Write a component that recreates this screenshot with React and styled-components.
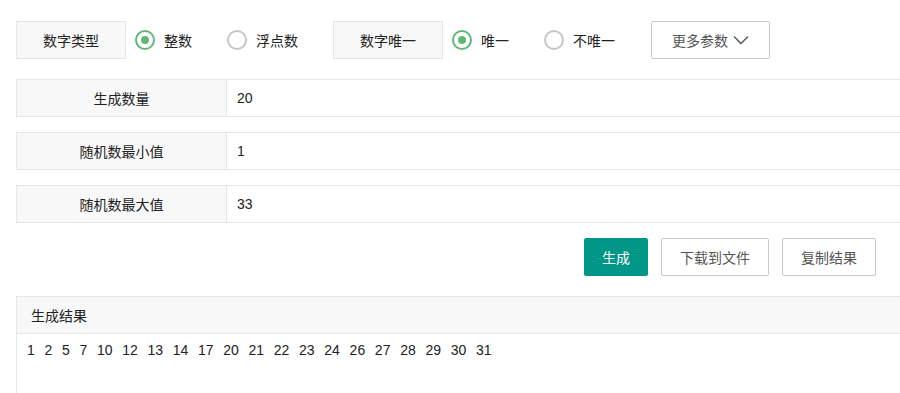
import React, { useState } from 'react';
import styled, { createGlobalStyle } from 'styled-components';

const GlobalStyle = createGlobalStyle`
  html, body {
    margin: 0;
    padding: 0;
    background: #fff;
    overflow: hidden;
  }
  body {
    font-family: "Liberation Sans", "Noto Sans CJK SC", sans-serif;
    font-size: 14px;
    color: #333;
  }
`;

const numbers = [1, 2, 5, 7, 10, 12, 13, 14, 17, 20, 21, 22, 23, 24, 26, 27, 28, 29, 30, 31];

const fields = [
  { label: '生成数量', value: '20' },
  { label: '随机数最小值', value: '1' },
  { label: '随机数最大值', value: '33' },
];

const App = () => {
  const [numType, setNumType] = useState('int');
  const [unique, setUnique] = useState('yes');

  return (
    <Page>
      <GlobalStyle />
      <OptionBar>
        <OptionLabel>数字类型</OptionLabel>
        <RadioGroup>
          <RadioOption onClick={() => setNumType('int')}>
            <RadioCircle $checked={numType === 'int'} />
            整数
          </RadioOption>
          <RadioOption onClick={() => setNumType('float')}>
            <RadioCircle $checked={numType === 'float'} />
            浮点数
          </RadioOption>
        </RadioGroup>
        <OptionLabel>数字唯一</OptionLabel>
        <RadioGroup>
          <RadioOption onClick={() => setUnique('yes')}>
            <RadioCircle $checked={unique === 'yes'} />
            唯一
          </RadioOption>
          <RadioOption onClick={() => setUnique('no')}>
            <RadioCircle $checked={unique === 'no'} />
            不唯一
          </RadioOption>
        </RadioGroup>
        <MoreButton>
          更多参数
          <svg width="16" height="10" viewBox="0 0 16 10" fill="none">
            <path d="M1 1.5 L8 8.5 L15 1.5" stroke="#555" strokeWidth="1.4" />
          </svg>
        </MoreButton>
      </OptionBar>

      <FieldList>
        {fields.map(f => (
          <FieldRow key={f.label}>
            <FieldLabel>{f.label}</FieldLabel>
            <FieldValue>{f.value}</FieldValue>
          </FieldRow>
        ))}
      </FieldList>

      <ActionBar>
        <Button $primary>生成</Button>
        <Button>下载到文件</Button>
        <Button>复制结果</Button>
      </ActionBar>

      <ResultPanel>
        <ResultHeader>生成结果</ResultHeader>
        <ResultBody>
          {numbers.map(n => (
            <Num key={n}>{n}</Num>
          ))}
        </ResultBody>
      </ResultPanel>
    </Page>
  );
};

const Page = styled.div`
  width: 1000px;
  padding: 21px 0 0 16px;
  box-sizing: border-box;
`;

const OptionBar = styled.div`
  display: flex;
  align-items: center;
  height: 38px;
`;

const OptionLabel = styled.div`
  width: 110px;
  height: 38px;
  box-sizing: border-box;
  border: 1px solid #e6e6e6;
  background: #f8f8f8;
  display: flex;
  align-items: center;
  justify-content: center;
  color: #222;
`;

const RadioGroup = styled.div`
  display: flex;
  align-items: center;
  gap: 35px;
  padding-left: 9px;
  margin-right: 35px;
`;

const RadioOption = styled.label`
  display: flex;
  align-items: center;
  gap: 9px;
  cursor: pointer;
  color: #222;
`;

const RadioCircle = styled.span`
  width: 20px;
  height: 20px;
  box-sizing: border-box;
  border-radius: 50%;
  border: 2px solid ${({ $checked }) => ($checked ? '#5fb878' : '#c6c6c6')};
  display: flex;
  align-items: center;
  justify-content: center;

  &::after {
    content: '';
    width: 8px;
    height: 8px;
    border-radius: 50%;
    background: #5fb878;
    display: ${({ $checked }) => ($checked ? 'block' : 'none')};
  }
`;

const MoreButton = styled.button`
  height: 38px;
  width: 119px;
  margin-left: 1px;
  box-sizing: border-box;
  border: 1px solid #c9c9c9;
  border-radius: 2px;
  background: #fff;
  color: #555;
  font: inherit;
  display: flex;
  align-items: center;
  justify-content: center;
  gap: 5px;
  padding: 0;
`;

const FieldList = styled.div`
  display: flex;
  flex-direction: column;
  gap: 15px;
  margin-top: 20px;
`;

const FieldRow = styled.div`
  display: flex;
  height: 38px;
  box-sizing: border-box;
  border: 1px solid #e6e6e6;
`;

const FieldLabel = styled.div`
  width: 209px;
  flex-shrink: 0;
  background: #f8f8f8;
  border-right: 1px solid #e6e6e6;
  display: flex;
  align-items: center;
  justify-content: center;
  color: #222;
`;

const FieldValue = styled.div`
  flex: 1;
  display: flex;
  align-items: center;
  padding-left: 10px;
  color: #222;
`;

const ActionBar = styled.div`
  display: flex;
  gap: 13px;
  margin-top: 15px;
  padding-left: 568px;
`;

const Button = styled.button`
  height: 38px;
  box-sizing: border-box;
  padding: 0 ${({ $primary }) => ($primary ? '17px' : '18px')};
  border-radius: 2px;
  font: inherit;
  border: 1px solid ${({ $primary }) => ($primary ? '#009688' : '#c9c9c9')};
  background: ${({ $primary }) => ($primary ? '#009688' : '#fff')};
  color: ${({ $primary }) => ($primary ? '#fff' : '#555')};
`;

const ResultPanel = styled.div`
  margin-top: 20px;
  border: 1px solid #e6e6e6;
  height: 200px;
`;

const ResultHeader = styled.div`
  height: 36px;
  background: #f8f8f8;
  border-bottom: 1px solid #e6e6e6;
  display: flex;
  align-items: center;
  padding-left: 14px;
  color: #222;
`;

const ResultBody = styled.div`
  padding: 6px 10px;
  line-height: 20px;
  color: #222;
`;

const Num = styled.span`
  margin-right: 9.7px;
`;

export default App;
